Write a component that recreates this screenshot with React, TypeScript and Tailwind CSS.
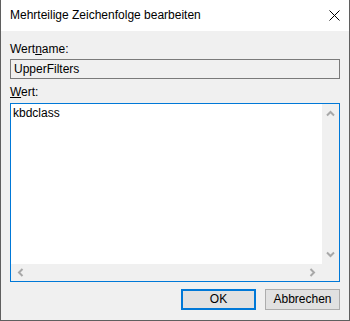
import React from "react";

const Chevron: React.FC<{ dir: "up" | "down" | "left" | "right" }> = ({ dir }) => {
  const rot = { up: 0, right: 90, down: 180, left: 270 }[dir];
  return (
    <svg width="9" height="9" viewBox="0 0 9 9" style={{ transform: `rotate(${rot}deg)` }}>
      <path d="M1 6.5 L4.5 3 L8 6.5" fill="none" stroke="#a8a8a8" strokeWidth="2" />
    </svg>
  );
};

const App: React.FC = () => {
  return (
    <div
      className="w-[350px] h-[321px] bg-[#f0f0f0] border-l border-r border-b border-[#5f5f5f] flex flex-col text-[12px] text-black"
      style={{ fontFamily: '"Liberation Sans", Arial, sans-serif' }}
    >
      {/* title bar */}
      <div className="h-[31px] bg-white flex items-center justify-between pl-[9px] pr-[9px] shrink-0">
        <span className="leading-[15px]">Mehrteilige Zeichenfolge bearbeiten</span>
        <svg width="11" height="11" viewBox="0 0 11 11">
          <path d="M0.5 0.5 L10.5 10.5 M10.5 0.5 L0.5 10.5" stroke="#000" strokeWidth="1" />
        </svg>
      </div>

      <div className="px-[9px] flex flex-col">
        <div className="mt-[11px] h-[15px] leading-[15px]">
          Wert<span className="underline">n</span>ame:
        </div>
        <div className="mt-[2px] h-[20px] border border-[#7a7a7a] bg-[#f0f0f0] flex items-center pl-[3px] leading-[15px]">
          UpperFilters
        </div>
        <div className="mt-[6px] h-[15px] leading-[15px]">
          <span className="underline">W</span>ert:
        </div>
        <div className="mt-[3px] h-[179px] border border-[#0078d7] bg-white flex flex-col">
          <div className="flex flex-1">
            <div className="flex-1 pl-[2px] pt-[2px] leading-[15px]">kbdclass</div>
            <div className="w-[17px] bg-[#f0f0f0] flex flex-col items-center justify-between py-[5px]">
              <Chevron dir="up" />
              <Chevron dir="down" />
            </div>
          </div>
          <div className="h-[17px] bg-[#f0f0f0] flex items-center justify-between pl-[5px] pr-[22px]">
            <Chevron dir="left" />
            <Chevron dir="right" />
          </div>
        </div>
        <div className="mt-[7px] flex justify-end gap-[9px]">
          <button className="w-[75px] h-[21px] border-2 border-[#0078d7] bg-[#e1e1e1] leading-[15px]">
            OK
          </button>
          <button className="w-[75px] h-[21px] border border-[#adadad] bg-[#e1e1e1] leading-[15px]">
            Abbrechen
          </button>
        </div>
      </div>
    </div>
  );
};

export default App;
